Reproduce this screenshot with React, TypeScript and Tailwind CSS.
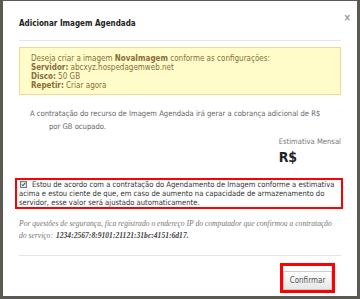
export default function App() {
  const sans = { fontFamily: '"DejaVu Sans Condensed", "DejaVu Sans", Verdana, sans-serif' }
  return (
    <div className="h-[299px] w-[360px] overflow-hidden bg-[#5a5a52] pt-px pl-[3px]">
      <div className="flex h-[295px] w-[354px] flex-col bg-white px-4 text-[#333]" style={sans}>
        {/* header */}
        <div className="relative border-b border-[#e5e5e5] pt-4 pb-[9px]">
          <h4 className="text-[8px] leading-[14px] font-bold text-[#222]">Adicionar Imagem Agendada</h4>
          <span className="absolute top-[12px] right-[-10px] text-[10px] leading-none font-bold text-[#999]">×</span>
        </div>

        {/* alerta */}
        <div className="mt-[6px] border border-[#f3d98f] bg-[#fffcca] pt-[6px] pr-2 pb-[4px] pl-[11px] text-[8px] leading-[9px] text-[#8a6d3b]">
          <div>
            Deseja criar a imagem <b>NovaImagem</b> conforme as configurações:
          </div>
          <div>
            <b>Servidor:</b> abcxyz.hospedagemweb.net
          </div>
          <div>
            <b>Disco:</b> 50 GB
          </div>
          <div>
            <b>Repetir:</b> Criar agora
          </div>
        </div>

        <p className="mt-3 pl-[30px] pr-3 text-[7.6px] leading-[13px] text-[#666] -indent-[19px]">
          A contratação do recurso de Imagem Agendada irá gerar a cobrança adicional de R$ por GB ocupado.
        </p>

        <div className="mt-[4px] flex justify-end">
          <div>
            <div className="text-[7.6px] leading-[10px] text-[#777]">Estimativa Mensal</div>
            <div className="mt-[1px] text-[14px] leading-[18px] font-bold text-[#222]">R$</div>
          </div>
        </div>

        {/* aceite */}
        <label className="mt-[12px] -ml-1 -mr-[2px] block border-2 border-[#ff0000] pl-[2px] text-[7.6px] leading-[9px] text-[#333]">
          <span className="mr-[5px] ml-px inline-block h-[7px] w-[7px] translate-y-[1px] border border-[#777] bg-[#e8e8e8] align-baseline">
            <svg viewBox="0 0 7 7" className="block h-[5px] w-[5px]">
              <path d="M1 3.5 L2.8 5.2 L6 1.2" fill="none" stroke="#222" strokeWidth="1.4" />
            </svg>
          </span>
          Estou de acordo com a contratação do Agendamento de Imagem conforme a estimativa acima e estou ciente de que, em caso de aumento na capacidade de armazenamento do servidor, esse valor será ajustado automaticamente.
        </label>

        <div
          className="mt-[9px] text-[7.6px] leading-[12px] text-[#777] italic"
          style={{ fontFamily: '"Liberation Serif", Georgia, serif' }}
        >
          <div>Por questões de segurança, fica registrado o endereço IP do computador que confirmou a contratação</div>
          <div className="flex gap-[3px]">
            <span>do serviço:</span>
            <b className="text-[#444]">1234:2567:8:9101:21121:31bc:4151:6d17.</b>
          </div>
        </div>

        {/* rodapé */}
        <div className="mt-auto mb-[3px] flex justify-end border-t border-[#e5e5e5] pt-[7px]">
          <div className="mr-[6px] border-[3px] border-[#ff0000]">
            <button className="h-[19px] w-[49px] border border-[#ccc] bg-gradient-to-b from-white to-[#e6e6e6] text-[8px] text-[#555]">
              Confirmar
            </button>
          </div>
        </div>
      </div>
    </div>
  )
}
